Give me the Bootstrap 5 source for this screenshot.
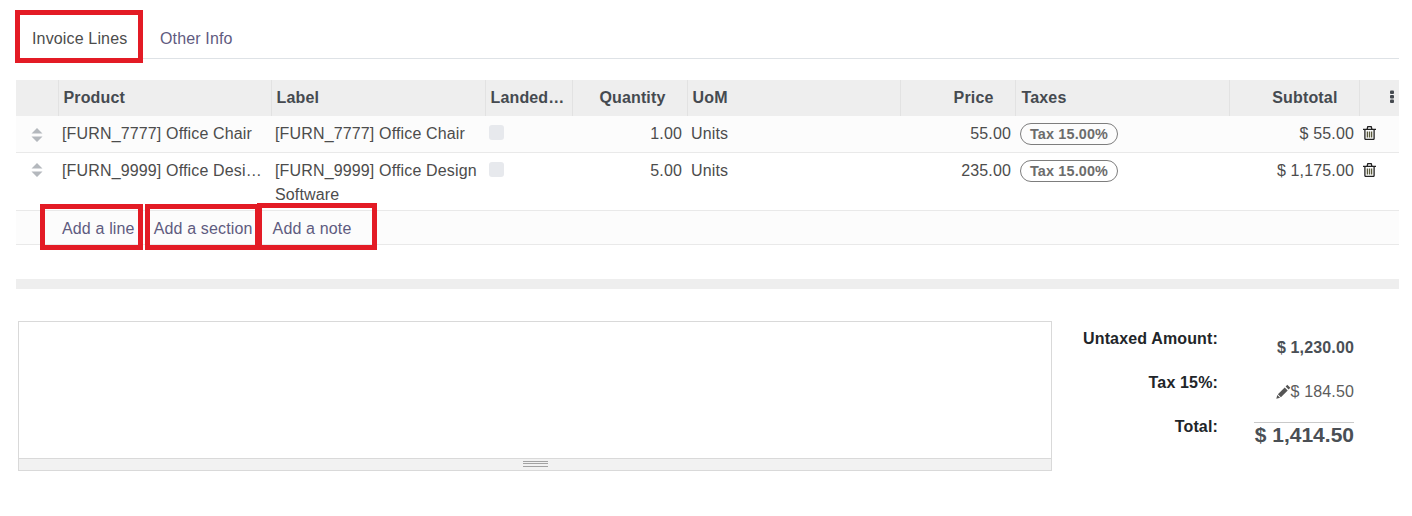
<!DOCTYPE html>
<html lang="en">
<head>
<meta charset="utf-8">
<title>Invoice Lines</title>
<link href="https://cdn.jsdelivr.net/npm/bootstrap@5.3.0/dist/css/bootstrap.min.css" rel="stylesheet">
<style>
html,body{height:516px;overflow:hidden}
body{font-family:"Liberation Sans",Arial,sans-serif;font-size:16px;letter-spacing:.15px;color:#4c4c4c;background:#fff}
.sheet{position:relative;width:1412px;height:516px;padding:14px 13px 0 16px}
.tabbar{height:45px;border-bottom:1px solid #dee2e6;gap:0}
.tabbar .nav-link{padding:0 16px;height:44px;line-height:49px;border:0;background:none;color:#5f5b7f;border-radius:0;margin:0;white-space:nowrap}
.tabbar .nav-link.active{color:#4c4c4c;width:127px}
.tabbar .nav-link.other{padding-left:17px}
.lines{table-layout:fixed;width:1383px;margin:21px 0 0;border-collapse:collapse;color:#4c4c4c}
.lines th,.lines td{padding:0 5px;border:0;background:transparent;box-shadow:none;color:inherit;font-weight:400;vertical-align:top}
.lines thead th{height:36px;background:#eeeeee;font-weight:700;color:#454a50;line-height:35px;border-left:1px solid #e2e2e2;white-space:nowrap}
.lines thead th:first-child{border-left:0}
.lines tbody td{line-height:24px;padding-top:6px;background:#fcfcfc;border-bottom:1px solid #e9e9e9}
.lines tbody tr.row-one td{height:36px}
.lines tbody tr.row-two td{height:58px;background:#fff}
.lines tbody tr.row-add td{height:34px;padding:6px 0 0;background:#fcfcfc;border-bottom:1px solid #e9e9e9}
.lines .num{text-align:right}
.lines td.price{padding-right:4px}
.lines td.txt{padding-left:4px}
.trunc{white-space:nowrap;overflow:hidden;text-overflow:ellipsis}
.handle{display:block;margin:6px 0 0 10px}
.row-two .handle{margin-top:4px}
.tick{display:block;width:15px;height:15px;border-radius:3px;background:#e7e9ed;margin:3px 0 0 -1px}
.taxpill{display:inline-block;border:1px solid #7d7d7d;border-radius:11px;height:22px;line-height:20px;padding:0 9px;font-size:14.4px;font-weight:700;color:#6c6c6c;margin:1px 0 0 1px;vertical-align:top;white-space:nowrap}
.bin{display:block;margin-top:4px}
.row-two .bin{margin-top:4px}
.addlinks{display:flex;padding-left:46px;line-height:24px}
.addlinks a{color:#5f5b7f;text-decoration:none}
.addlinks a.l2{margin-left:19px}
.addlinks a.l3{margin-left:20px}
.band{height:10px;background:#eeeeee;width:1383px;margin-top:34px}
.lower{margin-top:32px;display:flex;width:1383px}
.editor{width:1034px;height:150px;margin-left:2px;border:1px solid #d9d9d9;display:flex;flex-direction:column}
.editor-body{flex:1}
.editor-foot{height:12px;background:#f2f2f2;border-top:1px solid #d9d9d9;display:flex;justify-content:center;align-items:center}
.grip{display:block;width:25px;height:6px;border-top:1px solid #a3a3a3;border-bottom:1px solid #a3a3a3;position:relative}
.grip::after{content:"";display:block;height:1px;background:#a3a3a3;margin-top:1px}
.totals{width:347px;margin-left:0;position:relative;font-size:16px}
.tot-row{display:flex}
.tot-lab{width:166px;text-align:right;font-weight:700;color:#212529;line-height:24px;padding-top:6px}
.tot-val{width:136px;text-align:right;margin-left:0;white-space:nowrap}
.r1{height:44px}
.r1 .tot-val{font-weight:700;color:#4a4f55;line-height:20px;padding-top:17px}
.r2{height:56px}
.r2 .tot-val{line-height:20px;padding-top:17px;color:#5c5c5c;display:flex;justify-content:flex-end;align-items:flex-start}
.r3 .tot-lab{padding-top:0;margin-top:-6px}
.r3 .tot-val{font-weight:700;font-size:21px;letter-spacing:0;color:#4a4f55;line-height:24px;border-top:1px solid #c9c9c9;margin-left:36px;width:100px;margin-top:1px;padding-top:0}
.pencil{margin:2px 0 0 0}
.mark-box{position:absolute;border:5px solid #e31b25;pointer-events:none}
.m1{left:15px;top:10px;width:128px;height:53px}
.m2{left:40px;top:204px;width:103px;height:46px}
.m3{left:145px;top:204px;width:115px;height:46px}
.m4{left:257px;top:203px;width:120px;height:47px}
</style>
</head>
<body>
<div class="sheet">
  <ul class="nav tabbar">
    <li class="nav-item"><a class="nav-link active" href="#">Invoice Lines</a></li>
    <li class="nav-item"><a class="nav-link other" href="#">Other Info</a></li>
  </ul>
  <table class="table lines">
    <colgroup>
      <col style="width:42px"><col style="width:213px"><col style="width:214px"><col style="width:87px"><col style="width:115px"><col style="width:213px"><col style="width:115px"><col style="width:214px"><col style="width:130px"><col style="width:40px">
    </colgroup>
    <thead>
      <tr>
        <th></th><th>Product</th><th>Label</th><th class="trunc">Landed…</th><th class="num" style="padding-right:21px">Quantity</th><th>UoM</th><th class="num" style="padding-right:21px">Price</th><th style="padding-left:6px">Taxes</th><th class="num" style="padding-right:21px">Subtotal</th>
        <th class="p-0"><svg class="d-block" width="40" height="35" viewBox="0 0 40 35"><g fill="#454a50"><rect x="30" y="10.500" width="4" height="3.500" rx="1"/><rect x="30" y="15" width="4" height="3.500" rx="1"/><rect x="30" y="19.500" width="4" height="3.500" rx="1"/></g></svg></th>
      </tr>
    </thead>
    <tbody>
      <tr class="row-one">
        <td><svg class="handle" width="12" height="14" viewBox="0 0 12 14"><path fill="#b4b8bd" d="M6 0l5.500 5.500H.5zM6 14L.5 8.500h11z"/></svg></td>
        <td class="trunc txt">[FURN_7777] Office Chair</td>
        <td class="txt">[FURN_7777] Office Chair</td>
        <td><span class="tick"></span></td>
        <td class="num">1.00</td>
        <td class="txt">Units</td>
        <td class="num price">55.00</td>
        <td class="txt"><span class="taxpill">Tax 15.00%</span></td>
        <td class="num">$ 55.00</td>
        <td style="padding-left:4px"><svg class="bin" width="13" height="14" viewBox="0 0 13 14"><path fill="none" stroke="#222" stroke-width="1.300" d="M0 3.400h13M1.900 3.400v9.200q0 .8.800.8h7.600q.8 0 .8-.8V3.400M4 3.400L4.800.7h3.400L9 3.400"/><path stroke="#5a5a3c" stroke-width="1.300" d="M4.400 5.500v6M6.500 5.500v6M8.600 5.500v6"/></svg></td>
      </tr>
      <tr class="row-two">
        <td><svg class="handle" width="12" height="14" viewBox="0 0 12 14"><path fill="#b4b8bd" d="M6 0l5.500 5.500H.5zM6 14L.5 8.500h11z"/></svg></td>
        <td class="trunc txt" style="padding-right:7px">[FURN_9999] Office Design Software</td>
        <td class="txt">[FURN_9999] Office Design Software</td>
        <td><span class="tick"></span></td>
        <td class="num">5.00</td>
        <td class="txt">Units</td>
        <td class="num price">235.00</td>
        <td class="txt"><span class="taxpill">Tax 15.00%</span></td>
        <td class="num">$ 1,175.00</td>
        <td style="padding-left:4px"><svg class="bin" width="13" height="14" viewBox="0 0 13 14"><path fill="none" stroke="#222" stroke-width="1.300" d="M0 3.400h13M1.900 3.400v9.200q0 .8.800.8h7.600q.8 0 .8-.8V3.400M4 3.400L4.800.7h3.400L9 3.400"/><path stroke="#5a5a3c" stroke-width="1.300" d="M4.400 5.500v6M6.500 5.500v6M8.600 5.500v6"/></svg></td>
      </tr>
      <tr class="row-add">
        <td colspan="10"><div class="addlinks"><a href="#">Add a line</a><a class="l2" href="#">Add a section</a><a class="l3" href="#">Add a note</a></div></td>
      </tr>
    </tbody>
  </table>
  <div class="band"></div>
  <div class="lower">
    <div class="editor"><div class="editor-body"></div><div class="editor-foot"><span class="grip"></span></div></div>
    <div class="totals">
      <div class="tot-row r1"><div class="tot-lab">Untaxed Amount:</div><div class="tot-val">$ 1,230.00</div></div>
      <div class="tot-row r2"><div class="tot-lab">Tax 15%:</div><div class="tot-val"><svg class="pencil" width="15" height="15" viewBox="0 0 15 15"><path fill="#555" d="M11.300 0.800l3 3-1.700 1.700-3-3zM8.700 3.400l3 3-6.800 6.800-3-3zM1.300 11l2.800 2.800-3.800 1z"/></svg>$ 184.50</div></div>
      <div class="tot-row r3"><div class="tot-lab">Total:</div><div class="tot-val">$ 1,414.50</div></div>
    </div>
  </div>
  <div class="mark-box m1"></div>
  <div class="mark-box m2"></div>
  <div class="mark-box m3"></div>
  <div class="mark-box m4"></div>
</div>
<script src="https://cdn.jsdelivr.net/npm/bootstrap@5.3.0/dist/js/bootstrap.bundle.min.js"></script>
</body>
</html>
